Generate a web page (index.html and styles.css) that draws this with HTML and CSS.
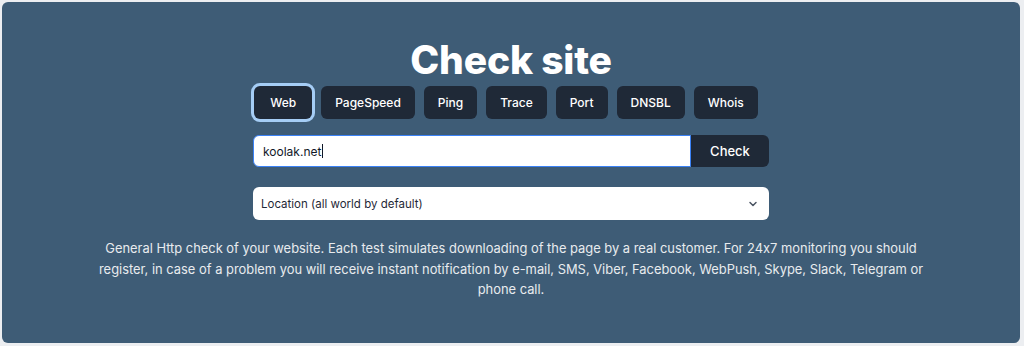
FILE: index.html
```html
<!DOCTYPE html>
<html lang="en">
<head>
<meta charset="utf-8">
<link rel="stylesheet" href="styles.css">
</head>
<body>
<main class="panel">
  <h1 class="title">Check site</h1>
  <nav class="tabs">
    <button class="tab active">Web</button>
    <button class="tab">PageSpeed</button>
    <button class="tab">Ping</button>
    <button class="tab">Trace</button>
    <button class="tab">Port</button>
    <button class="tab">DNSBL</button>
    <button class="tab">Whois</button>
  </nav>
  <form class="form">
    <div class="search">
      <div class="input">koolak.net<span class="caret"></span></div>
      <button class="check" type="button">Check</button>
    </div>
    <div class="select">
      <span>Location (all world by default)</span>
      <svg class="chev" width="12" height="12" viewBox="0 0 12 12"><path d="M3 4.5 L6 7.5 L9 4.5" fill="none" stroke="#4b5563" stroke-width="1.5" stroke-linecap="round" stroke-linejoin="round"/></svg>
    </div>
  </form>
  <p class="desc">General Http check of your website. Each test simulates downloading of the page by a real customer. For 24x7 monitoring you should register, in case of a problem you will receive instant notification by e-mail, SMS, Viber, Facebook, WebPush, Skype, Slack, Telegram or phone call.</p>
</main>
</body>
</html>
```

FILE: styles.css
```css
* { box-sizing: border-box; }
html, body { margin: 0; padding: 0; }
body {
  background: #eceef1;
  font-family: Inter, "Noto Sans", sans-serif;
  font-feature-settings: "calt" 0;
  padding: 2px 4px 3px 2px;
  height: 346px;
}
.panel {
  background: #3e5c76;
  border-radius: 6px;
  height: 341px;
  display: flex;
  flex-direction: column;
  align-items: center;
  padding-top: 35px;
}
.title {
  margin: 0;
  color: #fff;
  font-size: 39px;
  font-weight: 800;
  line-height: 46px;
  letter-spacing: -0.2px;
}
.tabs {
  display: flex;
  gap: 9px;
  margin-top: 3px;
  margin-right: 10px;
}
.tab {
  background: #1f2937;
  color: #fff;
  border: none;
  border-radius: 6px;
  height: 33px;
  padding: 0 14px;
  font-family: inherit;
  font-size: 12px;
  font-weight: 500;
}
.tab.active {
  box-shadow: 0 0 0 3px #a5cdf5;
  padding: 0 16px;
}
.form {
  width: 516px;
  margin-top: 16px;
  display: flex;
  flex-direction: column;
  gap: 20px;
}
.search {
  display: flex;
  height: 32px;
}
.input {
  flex: 1;
  background: #fff;
  border: 1px solid #3b82f6;
  border-radius: 6px 0 0 6px;
  display: flex;
  align-items: center;
  padding-left: 9px;
  font-size: 12px;
  color: #111827;
}
.caret {
  display: inline-block;
  width: 1px;
  height: 14px;
  background: #111827;
  margin-left: 1px;
}
.check {
  width: 78px;
  background: #1f2937;
  color: #fff;
  border: none;
  border-radius: 0 6px 6px 0;
  font-family: inherit;
  font-size: 13px;
  font-weight: 500;
}
.select {
  height: 33px;
  background: #fff;
  border-radius: 6px;
  display: flex;
  align-items: center;
  justify-content: space-between;
  padding: 0 8px 0 8px;
  font-size: 11.5px;
  color: #1f2937;
}
.chev { margin-right: 2px; }
.desc {
  margin: 19px 0 0;
  width: 840px;
  text-align: center;
  color: #e8ebee;
  font-size: 12.9px;
  line-height: 20.5px;
}
```
